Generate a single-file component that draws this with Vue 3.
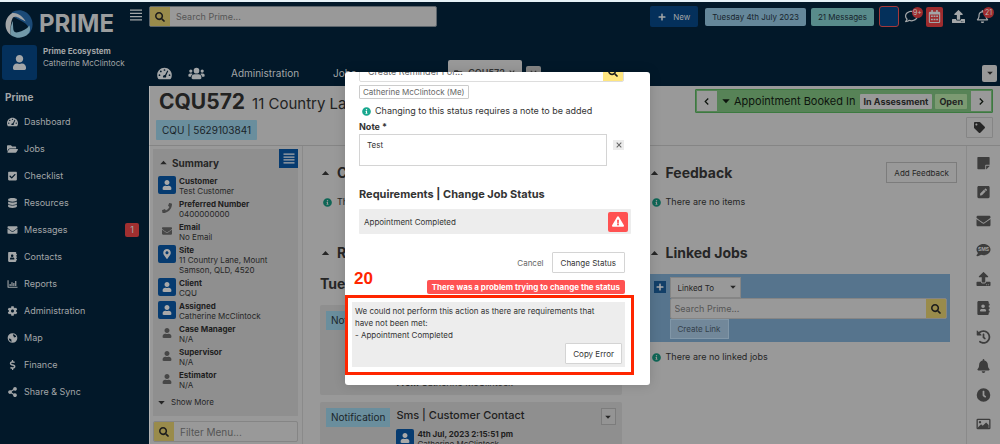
<script setup>
import { h, ref } from 'vue'

const USER = 'M224 256c70.7 0 128-57.3 128-128S294.7 0 224 0 96 57.3 96 128s57.3 128 128 128zm89.6 32h-16.7c-22.2 10.2-46.9 16-72.9 16s-50.6-5.8-72.9-16h-16.7C60.2 288 0 348.2 0 422.4V464c0 26.5 21.5 48 48 48h352c26.5 0 48-21.5 48-48v-41.6c0-74.2-60.2-134.4-134.4-134.4z'

const icons = {
  user: [448, USER],
  search: [512, 'M505 442.7L405.3 343c-4.5-4.5-10.6-7-17-7H372c27.6-35.3 44-79.7 44-128C416 93.1 322.9 0 208 0S0 93.1 0 208s93.1 208 208 208c48.3 0 92.7-16.4 128-44v16.3c0 6.4 2.5 12.5 7 17l99.7 99.7c9.4 9.4 24.6 9.4 33.9 0l28.3-28.3c9.4-9.4 9.4-24.6.1-34zM208 336c-70.7 0-128-57.2-128-128 0-70.7 57.2-128 128-128 70.7 0 128 57.2 128 128 0 70.7-57.2 128-128 128z'],
  folder: [576, 'M572.7 292.1L500.3 416.2A64 64 0 0 1 445 448H45c-18.5 0-30-20-20.700-36.100l72.400-124.100A64 64 0 0 1 152 256h400c18.500 0 30 20 20.700 36.100zM152 224h328v-48c0-26.500-21.500-48-48-48H272l-64-64H48C21.500 64 0 85.500 0 112v278l69-118.400C86.200 242.200 118 224 152 224z'],
  check: [448, 'M400 480H48c-26.500 0-48-21.500-48-48V80c0-26.500 21.500-48 48-48h352c26.500 0 48 21.500 48 48v352c0 26.500-21.500 48-48 48zM195.300 382l184-184c6.200-6.200 6.200-16.400 0-22.600l-22.600-22.600c-6.200-6.200-16.400-6.200-22.600 0L184 302.700l-70-70c-6.200-6.200-16.400-6.200-22.600 0l-22.600 22.600c-6.200 6.200-6.200 16.400 0 22.600l104 104c6.200 6.200 16.400 6.200 22.500.1z'],
  database: [448, 'M448 73.100v45.700C448 159 347.700 192 224 192S0 159 0 118.900V73.100C0 32.900 100.300 0 224 0s224 32.900 224 73.100zM448 176v102.900C448 319 347.700 352 224 352S0 319 0 278.900V176c48 33 136 48.600 224 48.600S400 209 448 176zm0 160v102.900C448 479 347.700 512 224 512S0 479 0 438.900V336c48 33 136 48.600 224 48.600S400 369 448 336z'],
  envelope: [512, 'M502.3 190.8c3.9-3.1 9.7-.2 9.7 4.7V400c0 26.500-21.500 48-48 48H48c-26.500 0-48-21.500-48-48V195.600c0-5 5.700-7.800 9.700-4.700 22.400 17.400 52.100 39.500 154.100 113.600 21.100 15.400 56.700 47.800 92.200 47.600 35.700.3 72-32.800 92.300-47.600 102-74.100 131.600-96.300 154-113.700zM256 320c23.200.4 56.600-29.200 73.400-41.400 132.700-96.300 142.800-104.700 173.400-128.700 5.800-4.500 9.200-11.500 9.200-18.900v-19c0-26.500-21.500-48-48-48H48c-26.500 0-48 21.500-48 48v19c0 7.400 3.400 14.300 9.200 18.900 30.600 23.900 40.700 32.400 173.400 128.700 16.800 12.200 50.200 41.800 73.400 41.400z'],
  book: [448, 'M436 160c6.600 0 12-5.400 12-12v-40c0-6.600-5.400-12-12-12h-20V48c0-26.500-21.500-48-48-48H48C21.500 0 0 21.500 0 48v416c0 26.500 21.500 48 48 48h320c26.500 0 48-21.500 48-48v-48h20c6.600 0 12-5.400 12-12v-40c0-6.600-5.400-12-12-12h-20v-64h20c6.600 0 12-5.400 12-12v-40c0-6.600-5.400-12-12-12h-20v-64h20zm-228-32c35.300 0 64 28.700 64 64s-28.700 64-64 64-64-28.700-64-64 28.700-64 64-64zm112 236.800c0 10.600-10 19.200-22.400 19.200H118.400C106 384 96 375.400 96 364.800v-19.200c0-31.800 30.100-57.600 67.200-57.600h5c12.300 5.100 25.700 8 39.800 8s27.600-2.900 39.800-8h5c37.100 0 67.200 25.800 67.200 57.600v19.200z'],
  chart: [512, 'M0 64h56v328h456v56H24a24 24 0 0 1-24-24zM104 256h60v96h-60zM200 160h60v192h-60zM296 208h60v144h-60zM392 96h60v256h-60z'],
  cog: [512, 'M487.4 315.7l-42.600-24.600c4.300-23.200 4.300-47 0-70.200l42.600-24.600c4.900-2.800 7.100-8.600 5.500-14-11.100-35.600-30-67.800-54.700-94.600-3.800-4.100-10-5.100-14.800-2.300L380.800 110c-17.900-15.400-38.500-27.300-60.800-35.100V25.800c0-5.600-3.900-10.500-9.400-11.700-36.700-8.200-74.300-7.800-109.200 0-5.500 1.200-9.400 6.100-9.400 11.700V75c-22.200 7.900-42.800 19.800-60.800 35.100L88.700 85.500c-4.900-2.800-11-1.900-14.800 2.300-24.700 26.700-43.600 58.900-54.700 94.600-1.700 5.400.6 11.200 5.500 14L67.300 221c-4.300 23.200-4.300 47 0 70.200l-42.600 24.600c-4.900 2.800-7.100 8.600-5.500 14 11.100 35.600 30 67.800 54.700 94.600 3.800 4.100 10 5.100 14.800 2.300l42.600-24.600c17.900 15.400 38.500 27.300 60.800 35.100v49.200c0 5.600 3.900 10.500 9.400 11.700 36.700 8.200 74.300 7.800 109.200 0 5.500-1.200 9.400-6.100 9.400-11.700v-49.200c22.200-7.900 42.800-19.800 60.800-35.100l42.600 24.600c4.900 2.800 11 1.900 14.800-2.300 24.700-26.700 43.600-58.900 54.700-94.600 1.500-5.500-.7-11.300-5.600-14.100zM256 336c-44.100 0-80-35.900-80-80s35.900-80 80-80 80 35.900 80 80-35.900 80-80 80z'],
  globe: [512, 'M256 8a248 248 0 1 0 0 496 248 248 0 0 0 0-496zM290 64c80 14 142 72 158 150l-60-14-34 34-44-26 14-52-48-28zM70 276l70 20 66 50-10 58 26 48C140 438 76 366 70 276z'],
  dollar: [288, 'M209 233l-108-31c-12-4-21-15-21-29 0-16 13-30 30-30h66c12 0 24 4 34 11 6 4 14 3 20-2l35-34c7-7 6-18-2-24-25-19-56-30-87-30V16c0-9-7-16-16-16h-32c-9 0-16 7-16 16v48h-3C53 64 0 118 7 182c4 46 40 83 84 96l102 30c12 4 21 15 21 29 0 16-13 30-30 30h-66c-12 0-24-4-34-11-6-4-14-3-20 2l-35 34c-7 7-6 18 2 24 25 19 56 30 87 30v50c0 9 7 16 16 16h32c9 0 16-7 16-16v-50c47-1 90-29 106-73 22-62-15-125-79-140z'],
  share: [448, 'M352 320c-22.600 0-43.400 7.800-59.800 20.900l-102.500-64a96.500 96.500 0 0 0 0-41.700l102.500-64C308.600 184.200 329.400 192 352 192c53 0 96-43 96-96S405 0 352 0s-96 43-96 96c0 7.200.8 14.100 2.300 20.800l-102.500 64C139.400 167.800 118.600 160 96 160c-53 0-96 43-96 96s43 96 96 96c22.600 0 43.400-7.800 59.800-20.900l102.500 64A96.300 96.300 0 0 0 256 416c0 53 43 96 96 96s96-43 96-96-43-96-96-96z'],
  gauge: [576, 'M288 32C129 32 0 161 0 320c0 52.800 14.200 102.300 39 144.800 5.600 9.600 16.300 15.200 27.500 15.200h443c11.200 0 21.900-5.600 27.500-15.200 24.800-42.500 39-92 39-144.800 0-159-129-288-288-288zM288 84a34 34 0 1 1 0 68 34 34 0 0 1 0-68zM144 142a34 34 0 1 1 0 68 34 34 0 0 1 0-68zM90 286a34 34 0 1 1 0 68 34 34 0 0 1 0-68zM486 286a34 34 0 1 1 0 68 34 34 0 0 1 0-68zM398 138l38 20-86 186a66 66 0 0 1-10 72H236a66 66 0 0 1 72-98z'],
  users: [640, 'M96 224a64 64 0 1 0 0-128 64 64 0 0 0 0 128zM544 224a64 64 0 1 0 0-128 64 64 0 0 0 0 128zM320 256a112 112 0 1 0 0-224 112 112 0 0 0 0 224zM64 256h64c18 0 34 7 45 19-40 22-68 61-74 109H32c-18 0-32-14-32-32v-32c0-35 29-64 64-64zM576 256h-64c-18 0-34 7-45 19 40 22 68 61 74 109h67c18 0 32-14 32-32v-32c0-35-29-64-64-64zM243 288h154c64 0 115 51 115 115v29c0 26-22 48-48 48H176c-26 0-48-22-48-48v-29c0-64 51-115 115-115z'],
  phone: [512, 'M493.4 24.6l-104-24c-11.300-2.600-22.900 3.300-27.500 13.900l-48 112c-4.200 9.800-1.400 21.300 6.900 28l60.600 49.600c-36 76.700-98.900 140.500-177.200 177.200l-49.600-60.600c-6.800-8.300-18.200-11.100-28-6.900l-112 48C3.900 366.500-2 378.100.6 389.400l24 104C27.100 504.200 36.700 512 48 512c256.100 0 464-207.500 464-464 0-11.200-7.700-20.900-18.600-23.400z'],
  pin: [384, 'M172.3 501.700C27 291 0 269.400 0 192 0 86 86 0 192 0s192 86 192 192c0 77.400-27 99-172.300 309.700-9.500 13.800-29.900 13.800-39.400 0zM192 272c44.200 0 80-35.800 80-80s-35.800-80-80-80-80 35.800-80 80 35.800 80 80 80z'],
  tag: [512, 'M0 252V48C0 21.500 21.500 0 48 0h204a48 48 0 0 1 34 14l212 212c18.700 18.700 18.700 49 0 67.900L293.800 498c-18.700 18.700-49 18.700-67.900 0L14 286a48 48 0 0 1-14-34zM112 64c-26.500 0-48 21.500-48 48s21.500 48 48 48 48-21.500 48-48-21.500-48-48-48z'],
  upload: [512, 'M296 384h-80c-13.300 0-24-10.700-24-24V192h-87.700c-17.800 0-26.700-21.500-14.100-34.100L242.300 5.700c7.500-7.500 19.800-7.500 27.300 0l152.200 152.200c12.600 12.600 3.700 34.100-14.100 34.100H320v168c0 13.300-10.700 24-24 24zm216-8v112c0 13.300-10.700 24-24 24H24c-13.300 0-24-10.700-24-24V376c0-13.300 10.700-24 24-24h136v8c0 30.900 25.100 56 56 56h80c30.900 0 56-25.100 56-56v-8h136c13.300 0 24 10.700 24 24zm-124 88c0-11-9-20-20-20s-20 9-20 20 9 20 20 20 20-9 20-20zm64 0c0-11-9-20-20-20s-20 9-20 20 9 20 20 20 20-9 20-20z'],
  warning: [576, 'M569.500 440C588 472 564.800 512 528 512H48c-37 0-60-40-41.500-72L246.400 24c18.500-32 64.700-32 83.200 0zM288 354c-25.400 0-46 20.600-46 46s20.600 46 46 46 46-20.600 46-46-20.600-46-46-46zm-43.700-165.300l7.400 136c.4 6.300 5.600 11.300 12 11.300h48.500c6.400 0 11.700-5 12-11.300l7.500-136c.4-6.900-5-12.700-12-12.700h-63.400c-6.900 0-12.400 5.800-12 12.700z'],
  info: [512, 'M256 8a248 248 0 1 0 0 496 248 248 0 0 0 0-496zm0 110c23.200 0 42 18.800 42 42s-18.800 42-42 42-42-18.800-42-42 18.800-42 42-42zm56 254c0 6.600-5.400 12-12 12h-88c-6.600 0-12-5.400-12-12v-24c0-6.600 5.400-12 12-12h12v-64h-12c-6.600 0-12-5.400-12-12v-24c0-6.600 5.400-12 12-12h64c6.600 0 12 5.400 12 12v100h12c6.600 0 12 5.400 12 12v24z'],
  note: [448, 'M312 320h136V56c0-13.300-10.700-24-24-24H24C10.700 32 0 42.700 0 56v400c0 13.300 10.700 24 24 24h264V344c0-13.200 10.800-24 24-24zm129 55l-98 98c-4.500 4.500-10.600 7-17 7h-6V352h128v6.100c0 6.300-2.500 12.400-7 16.900z'],
  pen: [448, 'M400 480H48c-26.500 0-48-21.500-48-48V80c0-26.500 21.500-48 48-48h352c26.500 0 48 21.500 48 48v352c0 26.500-21.500 48-48 48zM238.100 177.900L102.400 313.600l-6.300 57.100c-.8 7.600 5.600 14.100 13.300 13.300l57.100-6.300L302.200 242c2.300-2.300 2.300-6.100 0-8.500L246.700 178c-2.500-2.400-6.300-2.400-8.600-.1zM345 165.100L314.900 135c-9.400-9.400-24.600-9.400-33.900 0l-23.100 23.100c-2.300 2.300-2.300 6.100 0 8.500l55.500 55.500c2.300 2.300 6.100 2.300 8.500 0L345 199c9.300-9.300 9.300-24.500 0-33.900z'],
  history: [512, 'M504 255.500c.3 136.600-111.200 248.400-247.800 248.500-59 0-113.200-20.500-155.800-54.900-11.100-8.900-11.900-25.500-1.900-35.600l11.300-11.300c8.600-8.600 22.400-9.600 31.900-2C173 425 212.800 440 256 440c101.700 0 184-82.300 184-184 0-101.700-82.300-184-184-184-48.800 0-93 19-126 50l50.700 50.700c10 10 3 27.300-11.300 27.300H24c-8.800 0-16-7.200-16-16V38.600c0-14.200 17.200-21.400 27.300-11.300l49.400 49.400C129.200 34 189.600 8 256 8c136.800 0 247.700 110.800 248 247.500zM323 334.300l9.900-12.600c8-10.500 6.200-25.600-4.200-33.700L288 256.300V152c0-13.300-10.700-24-24-24h-16c-13.300 0-24 10.700-24 24v135.700l65.400 50.800c10.500 8.200 25.500 6.300 33.600-4.200z'],
  bell: [448, 'M224 512c35.300 0 64-28.600 64-64H160c0 35.400 28.700 64 64 64zm215.400-149.700c-19.300-20.800-55.500-52-55.500-154.300 0-77.700-54.500-139.900-127.900-155.200V32c0-17.700-14.300-32-32-32s-32 14.300-32 32v20.800C118.600 68 64 130.300 64 208c0 102.300-36 133.500-55.400 154.300C2.600 368.700 0 376.500 0 384c.1 16.400 13 32 32 32h384c19 0 32-15.600 32-32 0-7.500-2.600-15.300-8.600-21.700z'],
  bellLine: [448, 'M439.400 362.300c-19.300-20.800-55.500-52-55.500-154.300 0-77.700-54.500-139.900-127.900-155.200V32a32 32 0 1 0-64 0v20.800C118.600 68 64 130.300 64 208c0 102.300-36 133.500-55.400 154.300C2.600 368.700 0 376.500 0 384c.1 16.400 13 32 32 32h384c19 0 32-15.600 32-32 0-7.500-2.600-15.300-8.600-21.700zM67.500 368c21.200-28 44.400-74.300 44.500-159.400V208a112 112 0 1 1 224 0v.6c.1 85.100 23.300 131.500 44.500 159.400zM224 512c35.300 0 64-28.600 64-64H160c0 35.400 28.700 64 64 64z'],
  comment: [512, 'M256 32C114.600 32 0 125 0 240c0 47.600 20 91.200 52.900 126.300-14.900 39.400-45.900 72.800-46.400 73.200a23.700 23.700 0 0 0-4.600 26C5.800 474.400 14.500 480 24 480c61.500 0 110-25.700 139.100-46.300C192 442.800 223 448 256 448c141.400 0 256-93 256-208S397.400 32 256 32zm0 368c-26.700 0-53-4-78.400-12.100l-22.700-7.200-19.500 13.800c-14.300 10.100-34 21.400-57.500 29 7.300-12 14.400-25.700 19.900-40.200l10.600-28-20.600-21.900C70 314 48 282 48 240c0-88 93.300-160 208-160s208 72 208 160-93.300 160-208 160z'],
  bubble: [512, 'M256 32C114.600 32 0 125 0 240c0 47.600 20 91.200 52.900 126.300-14.900 39.400-45.900 72.800-46.400 73.200a23.700 23.700 0 0 0-4.600 26C5.800 474.400 14.500 480 24 480c61.500 0 110-25.700 139.100-46.300C192 442.800 223 448 256 448c141.400 0 256-93 256-208S397.400 32 256 32z'],
  calendar: [448, 'M0 464a48 48 0 0 0 48 48h352a48 48 0 0 0 48-48V112a48 48 0 0 0-48-48h-48V12a12 12 0 0 0-12-12h-40a12 12 0 0 0-12 12v52H160V12a12 12 0 0 0-12-12h-40a12 12 0 0 0-12 12v52H48a48 48 0 0 0-48 48zM44 176h360v292H44zM84 212h74v68H84zM187 212h74v68h-74zM290 212h74v68h-74zM84 340h74v68H84zM187 340h74v68h-74zM290 340h74v68h-74z'],
  clock: [512, 'M256 8a248 248 0 1 0 0 496 248 248 0 0 0 0-496zm92.500 313l-20 25a16 16 0 0 1-22.500 2.500l-67-49.700a40 40 0 0 1-15-31.300V112a16 16 0 0 1 16-16h32a16 16 0 0 1 16 16v144l58 42.500a16 16 0 0 1 2.500 22.500z'],
  image: [512, 'M464 64H48a48 48 0 0 0-48 48v288a48 48 0 0 0 48 48h416a48 48 0 0 0 48-48V112a48 48 0 0 0-48-48zM48 112h416v288h-20L444 290l-92-92-126 122-58-58-112 110v28h-8zM128 144a44 44 0 1 1 0 88 44 44 0 0 1 0-88z'],
  plus: [448, 'M416 208H272V64a32 32 0 0 0-32-32h-32a32 32 0 0 0-32 32v144H32a32 32 0 0 0-32 32v32a32 32 0 0 0 32 32h144v144a32 32 0 0 0 32 32h32a32 32 0 0 0 32-32V304h144a32 32 0 0 0 32-32v-32a32 32 0 0 0-32-32z'],
  close: [512, 'M90 30L256 196 422 30l60 60-166 166 166 166-60 60-166-166L90 482l-60-60 166-166L30 90z'],
  bars: [512, 'M0 20h512v58H0zM0 158h512v58H0zM0 296h512v58H0zM0 434h512v58H0z'],
  left: [512, 'M330 60l50 50-146 146 146 146-50 50-196-196z'],
  right: [512, 'M182 60l-50 50 146 146-146 146 50 50 196-196z'],
  down: [512, 'M20 140h472L256 400z'],
  up: [512, 'M20 380h472L256 120z'],
}

const Icon = (props) =>
  h('svg', { viewBox: `0 0 ${icons[props.name][0]} 512`, fill: 'currentColor', 'fill-rule': 'evenodd', 'aria-hidden': 'true' }, [
    h('path', { d: icons[props.name][1] }),
  ])
Icon.props = ['name']

const nav = [
  { icon: 'gauge', label: 'Dashboard' },
  { icon: 'folder', label: 'Jobs' },
  { icon: 'check', label: 'Checklist' },
  { icon: 'database', label: 'Resources' },
  { icon: 'envelope', label: 'Messages', count: 1 },
  { icon: 'book', label: 'Contacts' },
  { icon: 'chart', label: 'Reports' },
  { icon: 'cog', label: 'Administration' },
  { icon: 'globe', label: 'Map' },
  { icon: 'dollar', label: 'Finance' },
  { icon: 'share', label: 'Share & Sync' },
]

const summary = [
  { icon: 'user', label: 'Customer', value: 'Test Customer', active: true },
  { icon: 'phone', label: 'Preferred Number', value: '0400000000' },
  { icon: 'envelope', label: 'Email', value: 'No Email' },
  { icon: 'pin', label: 'Site', value: '11 Country Lane, Mount Samson, QLD, 4520', active: true },
  { icon: 'user', label: 'Client', value: 'CQU', active: true },
  { icon: 'user', label: 'Assigned', value: 'Catherine McClintock', active: true },
  { icon: 'user', label: 'Case Manager', value: 'N/A' },
  { icon: 'user', label: 'Supervisor', value: 'N/A' },
  { icon: 'user', label: 'Estimator', value: 'N/A' },
]

const rail = [
  ['note', 'Notes'], ['pen', 'Edit'], ['envelope', 'Email'], ['bubble', 'SMS'], ['upload', 'Upload'],
  ['book', 'Contacts'], ['history', 'History'], ['bell', 'Reminders'], ['clock', 'Time'], ['image', 'Images'],
]

const note = ref('Test')
</script>

<template>
  <div class="app">
    <aside class="sidebar">
      <div class="brand">
        <svg class="logo" viewBox="0 0 54 54" aria-hidden="true">
          <path d="M13 5C25-3 41 0 49 13c7 12 5 25-4 34 3-11 0-18-10-24L16 13z" fill="#1b4a77" />
          <path d="M14 6C4 12-1 24 2 35c2 6 5 10 9 13-1-14 0-25 4-33 3-3 8-2 13 1l12 6C34 12 24 4 14 6z" fill="#a3a6a8" />
          <path d="M11 48c11 8 26 7 34-2 4-5 4-11 2-16-5 7-13 11-22 13-5 1-8-1-9-6l-1-16c-4 8-5 18-4 27z" fill="#7299a9" />
          <path d="M20 18l21 10-19 12z" fill="#021829" />
        </svg>
        <span class="wordmark">PRIME</span>
        <button class="bare menu" aria-label="Toggle menu"><Icon name="bars" /></button>
      </div>
      <div class="profile">
        <span class="avatar"><Icon name="user" /></span>
        <div><strong>Prime Ecosystem</strong><br>Catherine McClintock</div>
      </div>
      <h2 class="nav-title">Prime</h2>
      <nav class="nav">
        <a v-for="n in nav" :key="n.label" href="#">
          <Icon :name="n.icon" /><span>{{ n.label }}</span><b v-if="n.count">{{ n.count }}</b>
        </a>
      </nav>
    </aside>

    <div class="page">
      <header class="topbar">
        <div class="tools">
          <div class="search">
            <button class="yellow" aria-label="Search"><Icon name="search" /></button>
            <input type="search" placeholder="Search Prime..." aria-label="Search Prime">
          </div>
          <button class="new"><Icon name="plus" />New</button>
          <button class="pill date">Tuesday 4th July 2023</button>
          <button class="pill messages">21 Messages</button>
          <button class="swatch" aria-label="Colour"></button>
          <button class="bare tool" aria-label="Chats"><Icon name="comment" /><i>9+</i></button>
          <button class="tool cal" aria-label="Calendar"><Icon name="calendar" /></button>
          <button class="bare tool up" aria-label="Upload"><Icon name="upload" /></button>
          <button class="bare tool" aria-label="Alerts"><Icon name="bellLine" /><i>21</i></button>
        </div>
        <nav class="tabs">
          <a href="#" aria-label="Dashboard"><Icon name="gauge" /></a>
          <a href="#" aria-label="Teams" class="team"><Icon name="users" /></a>
          <a href="#" class="word">Administration</a>
          <a href="#" class="word jobs">Jobs</a>
          <a href="#" class="current"><Icon name="folder" />CQU572<span class="x"><Icon name="close" /></span></a>
          <button class="closer" aria-label="Close tabs"><Icon name="close" /></button>
          <button class="drop" aria-label="More tabs"><Icon name="down" /></button>
        </nav>
      </header>

      <section class="jobhead">
        <div>
          <h1>CQU572 <small>11 Country Lane</small></h1>
          <span class="ref">CQU | 5629103841</span>
        </div>
        <div class="jobside">
          <div class="status">
            <button aria-label="Previous status"><Icon name="left" /></button>
            <Icon name="down" class="caret" />
            <span class="state">Appointment Booked In</span>
            <b>In Assessment</b><b class="open">Open</b>
            <button aria-label="Next status"><Icon name="right" /></button>
          </div>
          <button class="tagbtn" aria-label="Tags"><Icon name="tag" /></button>
        </div>
      </section>

      <div class="body">
        <section class="left">
          <div class="summary">
            <div class="sumhead">
              <Icon name="up" /><h2>Summary</h2>
              <button aria-label="Summary menu"><Icon name="bars" /></button>
            </div>
            <div v-for="s in summary" :key="s.label" class="fact">
              <span class="badge" :class="{ on: s.active }"><Icon :name="s.icon" /></span>
              <div><strong>{{ s.label }}</strong><br>{{ s.value }}</div>
            </div>
            <button class="bare more"><Icon name="down" />Show More</button>
          </div>
          <div class="search filter">
            <button class="yellow" aria-label="Filter"><Icon name="search" /></button>
            <input type="search" placeholder="Filter Menu..." aria-label="Filter menu">
          </div>
        </section>

        <section class="middle">
          <div class="sect"><Icon name="up" /><h2>Comments</h2></div>
          <p class="info"><Icon name="info" />There are no items</p>
          <div class="sect"><Icon name="up" /><h2>Recent</h2></div>
          <h2 class="day">Tuesday</h2>
          <article class="card first">
            <span class="kind">Notification</span>
            <p class="from"><strong>From</strong> Catherine McClintock</p>
          </article>
          <article class="card">
            <span class="kind">Notification</span>
            <div class="msg">
              <h3>Sms | Customer Contact</h3>
              <div class="fact">
                <span class="badge on"><Icon name="user" /></span>
                <div><strong>4th Jul, 2023 2:15:51 pm</strong><br>Catherine McClintock</div>
              </div>
            </div>
            <button class="carddrop" aria-label="Message actions"><Icon name="down" /></button>
          </article>
        </section>

        <section class="right">
          <div class="sect"><Icon name="up" /><h2>Feedback</h2><button class="addfb">Add Feedback</button></div>
          <p class="info"><Icon name="info" />There are no items</p>
          <div class="sect"><Icon name="up" /><h2>Linked Jobs</h2></div>
          <div class="linkbox">
            <button class="add" aria-label="Add link"><Icon name="plus" /></button>
            <div class="linkform">
              <span class="select">
                <select aria-label="Link type"><option>Linked To</option></select><Icon name="down" />
              </span>
              <div class="search">
                <input type="search" placeholder="Search Prime..." aria-label="Search jobs to link">
                <button class="yellow" aria-label="Search jobs"><Icon name="search" /></button>
              </div>
              <button class="create">Create Link</button>
            </div>
          </div>
          <p class="info"><Icon name="info" />There are no linked jobs</p>
        </section>

        <nav class="rail">
          <button v-for="r in rail" :key="r[1]" class="bare" :aria-label="r[1]">
            <Icon :name="r[0]" /><span v-if="r[1] === 'SMS'">SMS</span>
          </button>
        </nav>
      </div>
    </div>

    <div class="overlay">
      <div class="dialog" role="dialog" aria-label="Change job status">
        <div class="search remind">
          <input type="text" placeholder="Create Reminder For..." aria-label="Create reminder for">
          <button class="yellow" aria-label="Search people"><Icon name="search" /></button>
        </div>
        <span class="person">Catherine McClintock (Me)</span>
        <p class="info hint"><Icon name="info" />Changing to this status requires a note to be added</p>
        <label for="note">Note *</label>
        <div class="noterow">
          <textarea id="note" v-model="note"></textarea>
          <button aria-label="Clear note"><Icon name="close" /></button>
        </div>
        <h2>Requirements | Change Job Status</h2>
        <div class="req">Appointment Completed<button aria-label="Requirement not met"><Icon name="warning" /></button></div>
        <div class="actions">
          <button class="bare">Cancel</button>
          <button class="plain">Change Status</button>
        </div>
        <div class="failure"><span>There was a problem trying to change the status</span></div>
        <div class="errwrap">
          <span class="step">20</span>
          <div class="error">
            <p>We could not perform this action as there are requirements that have not been met:<br>- Appointment Completed</p>
            <button class="plain">Copy Error</button>
          </div>
        </div>
      </div>
    </div>
  </div>
</template>

<style>
body { margin: 0; overflow: hidden; }
</style>

<style scoped>
* { box-sizing: border-box; }
.app {
  position: relative; display: grid; grid-template-columns: 149px minmax(0, 1fr);
  height: 100vh; overflow: hidden; border-top: 2px solid #e6f1f7;
  background: #999; color: #262626; font: 8px/10px Inter, "Liberation Sans", sans-serif;
}
svg { display: block; flex: none; }
button, input, select, textarea { font: inherit; color: inherit; margin: 0; padding: 0; border: 0; border-radius: 0; outline: 0; }
button { display: flex; align-items: center; justify-content: center; flex: none; }
.bare { background: none; }
a { color: inherit; text-decoration: none; }
h1, h2, h3, p { margin: 0; }

.sidebar { background: #021829; color: #a3a6a8; }
.brand { display: flex; align-items: center; height: 43px; padding: 0 7px 0 5px; }
.logo { width: 28px; height: 28px; }
.wordmark { margin-left: 6px; font-size: 24px; line-height: 28px; font-weight: 700; color: #9b9d9e; }
.menu { margin: 0 0 17px auto; }
.menu svg { width: 12px; height: 12px; }
.profile { display: flex; gap: 6px; padding-left: 2px; line-height: 12px; }
.profile > div { white-space: nowrap; }
.avatar { display: grid; place-items: center; width: 35px; height: 35px; border-radius: 3px; background: #04305b; }
.avatar svg { width: 13px; height: 15px; }
.nav-title { padding: 10px 0 0 5px; font-size: 10px; line-height: 14px; }
.nav { display: flex; flex-direction: column; padding: 4px 10px 0 7px; font-size: 9px; }
.nav a { display: flex; align-items: center; gap: 6px; height: 27px; }
.nav svg { width: 11px; height: 10px; }
.nav b { display: grid; place-items: center; width: 14px; height: 14px; margin-left: auto; border-radius: 2px; background: #a02f30; font-weight: 400; }

.page { display: flex; flex-direction: column; min-width: 0; }
.topbar { flex: none; background: #021829; color: #a3a6a8; }
.tools { display: flex; align-items: center; height: 29px; padding-right: 6px; }
.search { display: flex; height: 21px; border: 1px solid #858585; border-radius: 2px; background: #999; overflow: hidden; }
.search input { flex: 1; min-width: 0; padding: 0 4px; background: none; font-size: 9px; color: #333; }
.search input::placeholder { color: #555; opacity: 1; }
.yellow { width: 20px; background: #998b4b; color: #1d1d1d; }
.yellow svg { width: 10px; height: 10px; }
.tools .search { width: 288px; border-color: #5c646b; }
.tools .search input, .filter input { padding-left: 6px; }
.new { gap: 7px; width: 48px; height: 21px; margin: 0 7px 0 auto; border-radius: 2px; background: #04305b; }
.new svg { width: 8px; height: 8px; }
.pill { height: 18px; padding: 0 7px; border-radius: 2px; margin-right: 5px; color: #17242c; }
.date { background: #65879a; }
.messages { background: #588b8b; }
.swatch { width: 20px; height: 21px; border: 1px solid #a5383a; border-radius: 3px; background: #04305b; }
.tool { position: relative; width: 24px; height: 20px; }
.tool svg { width: 13px; height: 13px; }
.tool i { position: absolute; top: 0; right: 0; width: 11px; height: 11px; border-radius: 6px; background: #9e2c2e; font-size: 7px; line-height: 11px; font-style: normal; text-align: center; color: #b4b4b4; }
.cal { width: 17px; margin: 0 3px; border-radius: 2px; background: #9e2c2e; }
.tabs { display: flex; align-items: center; height: 55px; padding: 29px 3px 0 8px; font-size: 10px; }
.tabs > a > svg { width: 15px; height: 13px; }
.tabs .team { margin-left: 16px; }
.tabs .team svg { width: 17px; }
.tabs .word { margin-left: 26px; }
.tabs .jobs { margin-left: 34px; }
.tabs .current { display: flex; gap: 4px; align-items: center; width: 74px; height: 26px; margin-left: 92px; padding: 0 6px; background: #999; color: #333; font-size: 9px; font-weight: 600; border-radius: 2px 2px 0 0; }
.tabs .current svg { width: 10px; height: 9px; }
.tabs .current .x svg { width: 6px; height: 6px; }
.closer { width: 15px; height: 15px; margin-left: 4px; border-radius: 2px; background: #858585; color: #333; }
.closer svg { width: 7px; height: 7px; }
.drop { width: 15px; height: 17px; margin-left: auto; border-radius: 2px; background: #999; color: #222; }
.drop svg, .carddrop svg { width: 6px; height: 6px; }

.jobhead { display: flex; flex: none; justify-content: space-between; height: 60px; padding: 3px 7px 0 9px; border-left: 1px solid #b3b3b3; border-bottom: 1px solid #858585; }
.jobhead > div { min-width: 0; }
h1 { font-size: 21px; line-height: 26px; font-weight: 700; white-space: nowrap; color: #222; }
h1 small { margin-left: 2px; font-size: 15px; font-weight: 400; }
.ref { display: block; width: max-content; height: 20px; margin: 3px 0 0 -3px; padding: 0 6px; background: #6a8e9d; font-size: 10px; line-height: 20px; border-radius: 1px; color: #1a2429; }
.jobside { display: flex; flex-direction: column; align-items: flex-end; gap: 4px; }
.status { display: flex; align-items: center; height: 24px; border: 1px solid #3c7a40; border-radius: 1px; background: #578357; color: #0d140d; }
.status button { width: 20px; height: 20px; margin: 0 1px; background: #999; }
.status button svg { width: 9px; height: 9px; }
.caret { width: 8px; height: 8px; margin: 0 4px; }
.state { margin-right: 4px; font-size: 11px; line-height: 16px; white-space: nowrap; }
.status b { height: 15px; margin-right: 3px; padding: 0 4px; border-radius: 1px; background: #999; font-size: 9px; line-height: 15px; font-weight: 700; white-space: nowrap; color: #222; }
.status .open { background: #7c9a72; }
.tagbtn { width: 27px; height: 21px; border: 1px solid #858585; border-radius: 1px; background: #999; }
.tagbtn svg { width: 11px; height: 11px; }

.body { display: grid; flex: 1; grid-template-columns: 154px minmax(0, 1fr) minmax(0, 1fr) 34px; min-height: 0; }
.left { padding: 3px 4px 0 3px; border-left: 1px solid #b3b3b3; border-right: 1px solid #8a8a8a; }
.summary { padding-bottom: 5px; background: #8f8f8f; }
.sumhead { display: flex; align-items: center; gap: 5px; height: 27px; padding-left: 7px; }
.sumhead > svg { width: 7px; height: 7px; }
.sumhead h2 { font-size: 10px; line-height: 14px; }
.sumhead button { width: 19px; height: 19px; margin: 0 0 8px auto; background: #063b70; color: #a9a9a9; }
.sumhead button svg { width: 12px; height: 11px; }
.fact { display: flex; gap: 3px; padding: 0 0 3px 5px; }
.fact strong { color: #1e1e1e; }
.badge { display: grid; flex: none; place-items: center; width: 18px; height: 18px; border-radius: 2px; color: #474747; }
.badge svg { width: 10px; height: 10px; }
.badge.on { background: #063b70; color: #a9a9a9; }
.more { gap: 6px; height: 18px; padding-left: 5px; }
.more svg { width: 7px; height: 7px; }
.filter { margin-top: 5px; }
.filter input { font-size: 10px; }

.middle { padding: 16px 13px 0 17px; }
.right { padding: 16px 16px 0 14px; }
.sect { display: flex; align-items: center; gap: 7px; height: 21px; padding-left: 1px; }
.sect > svg { width: 9px; height: 8px; }
.sect h2, .day { font-size: 14px; line-height: 20px; white-space: nowrap; }
.info { display: flex; align-items: center; gap: 5px; height: 12px; font-size: 9px; white-space: nowrap; }
.info svg { width: 9px; height: 9px; color: #0f6656; }
.middle .info, .right .info { margin: 13px 0 34px 3px; }
.addfb { height: 21px; margin: 0 -7px 0 auto; padding: 0 7px; border: 1px solid #7c7c7c; background: #999; }
.day { margin-top: 11px; }
.card { display: flex; align-items: flex-start; margin-top: 7px; padding: 6px; background: #8f8f8f; border-radius: 2px; min-height: 90px; }
.card.first { margin-top: 11px; }
.kind { flex: none; height: 19px; padding: 0 5px; background: #6a8e9d; font-size: 10px; line-height: 19px; color: #1a2429; }
.from { align-self: flex-end; margin: 0 0 1px 6px; font-size: 9px; }
.msg { flex: 1; margin-left: 6px; }
.msg h3 { font-size: 11px; line-height: 15px; font-weight: 500; color: #1e1e1e; }
.msg .fact { margin-top: 6px; padding: 0; }
.carddrop { width: 15px; height: 17px; border: 1px solid #7c7c7c; background: #949494; }
.linkbox { display: flex; gap: 4px; margin: 11px 0 0 -2px; padding: 3px 3px 3px 7px; background: #56748d; }
.right .linkbox + .info { margin-top: 9px; }
.add { width: 12px; height: 12px; margin-top: 4px; background: #123f68; color: #a9a9a9; }
.add svg { width: 8px; height: 8px; }
.linkform { flex: 1; }
.select { position: relative; display: block; width: 71px; }
.select select { width: 100%; height: 21px; padding-left: 7px; border: 1px solid #858585; background: #999; appearance: none; }
.select svg { position: absolute; top: 7px; right: 5px; width: 6px; height: 6px; pointer-events: none; }
.create { height: 20px; padding: 0 7px; border: 1px solid #8197a8; background: #72889a; color: #33404a; }
.rail { display: flex; flex-direction: column; align-items: center; padding-top: 2px; border-left: 1px solid #8a8a8a; }
.rail button { position: relative; width: 30px; height: 29px; color: #3d3d3d; }
.rail svg { width: 15px; height: 14px; }
.rail span { position: absolute; inset: 0; font-size: 5px; line-height: 28px; font-weight: 700; text-align: center; color: #a0a0a0; }

.overlay { position: absolute; inset: 0; display: flex; align-items: flex-start; justify-content: center; padding: 70px 5px 0 0; }
.dialog { width: 305px; padding: 0 25px 18px 14px; overflow: hidden; border-radius: 3px; background: #fff; color: #333; box-shadow: 0 0 12px rgba(0, 0, 0, .15); }
.dialog .search { background: #fff; border-color: #ddd; }
.dialog .remind { margin: -11px 1px 0 0; }
.remind .yellow { background: #ffe680; }
.dialog .search input::placeholder { color: #666; }
.dialog .remind input { padding-left: 8px; }
.person { display: inline-block; height: 14px; margin-top: 3px; padding: 0 3px; border: 1px solid #ccc; border-radius: 1px; line-height: 12px; color: #666; }
.hint { margin: 6px 0 0 3px; gap: 4px; }
.hint svg { color: #1aa88f; }
.dialog label { display: block; margin-top: 4px; font-size: 9px; line-height: 12px; font-weight: 700; }
.noterow { display: flex; gap: 6px; margin-top: 1px; align-items: flex-start; }
.noterow textarea { flex: 1; height: 32px; padding: 5px 7px; border: 1px solid #d4d4d4; resize: none; }
.noterow button { width: 11px; height: 10px; margin: 6px 1px 0 0; background: #ececec; }
.noterow button svg { width: 6px; height: 6px; color: #666; }
.dialog h2 { margin-top: 20px; font-size: 11px; line-height: 16px; white-space: nowrap; }
.req { display: flex; align-items: center; justify-content: space-between; height: 25px; margin: 7px -6px 0 0; padding: 0 3px 0 5px; background: #ededed; border-radius: 1px; }
.req button { width: 20px; height: 20px; border-radius: 2px; background: #ff5252; color: #fff; }
.req svg { width: 12px; height: 11px; }
.actions { display: flex; justify-content: flex-end; gap: 8px; margin-top: 18px; }
.actions .bare { color: #666; }
.plain { height: 21px; padding: 0 7px; border: 1px solid #d4d4d4; border-radius: 1px; background: #fff; }
.failure { display: flex; justify-content: flex-end; margin-top: 7px; }
.failure span { height: 14px; padding: 0 5px; border-radius: 2px; background: #ff5252; color: #fff; line-height: 14px; font-weight: 700; white-space: nowrap; }
.errwrap { position: relative; margin: 8px 0 0 -7px; }
.errwrap::after { content: ""; position: absolute; inset: -7px -9px -8px -7px; border: 3px solid #ff2600; pointer-events: none; }
.step { position: absolute; left: 2px; top: -33px; font: 700 17px/20px "Liberation Sans", Arial, sans-serif; color: #ff2600; }
.error { display: flex; flex-direction: column; padding: 3px; background: #ededed; line-height: 12px; }
.error p { padding-right: 16px; }
.error button { align-self: flex-end; margin-top: 2px; }
.actions .plain { padding: 0 8px; }
</style>
